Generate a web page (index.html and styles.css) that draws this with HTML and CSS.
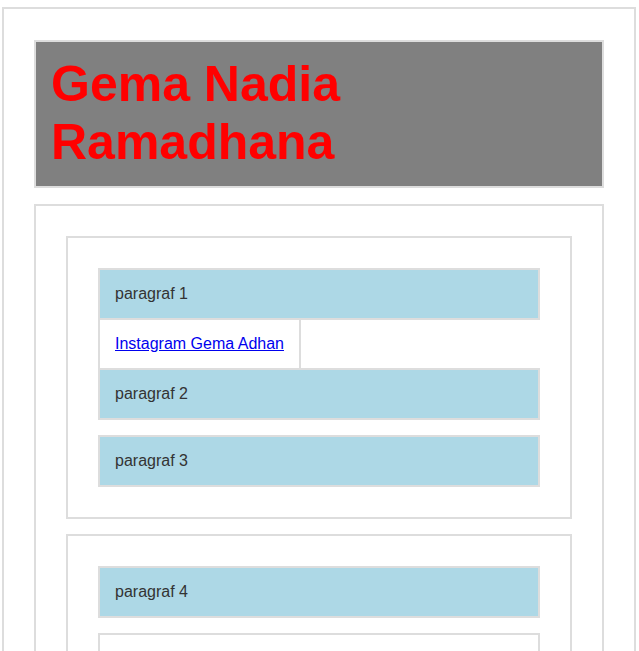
FILE: index.html
```html
<!DOCTYPE html>
<html>
<head>
<meta charset="utf-8">
<title>Gema Nadia Ramadhana</title>
<link rel="stylesheet" href="styles.css">
</head>
<body>
<div class="page">
  <header class="banner">
    <h1 class="title">Gema Nadia Ramadhana</h1>
  </header>
  <main class="section">
    <div class="card">
      <p class="para">paragraf 1</p>
      <div class="linkrow"><a class="link" href="#">Instagram Gema Adhan</a></div>
      <p class="para">paragraf 2</p>
      <p class="para spaced">paragraf 3</p>
    </div>
    <div class="card">
      <p class="para">paragraf 4</p>
      <div class="plain spaced"></div>
    </div>
  </main>
</div>
</body>
</html>
```

FILE: styles.css
```css
html, body {
  margin: 0;
  padding: 0;
  background: #ffffff;
}

body {
  font-family: "Liberation Sans", Arial, sans-serif;
  font-size: 16px;
  color: #333333;
}

.page {
  margin: 7px 3px 0 2px;
  border: 2px solid #dddddd;
  padding: 31px 30px 30px 30px;
}

.banner {
  background: #808080;
  border: 2px solid #dddddd;
  padding: 14px 15px 15px 15px;
}

.title {
  margin: 0;
  font-size: 50px;
  font-weight: bold;
  color: #ff0000;
  line-height: 57.5px;
}

.section {
  margin-top: 16px;
  border: 2px solid #dddddd;
  padding: 30px;
}

.card {
  border: 2px solid #dddddd;
  padding: 30px;
}

.card + .card {
  margin-top: 15px;
}

.para {
  margin: 0;
  background: #add8e6;
  border: 2px solid #dddddd;
  padding: 15px;
  line-height: 18px;
}

.spaced {
  margin-top: 15px;
}

.linkrow {
  height: 48px;
}

.link {
  display: inline-block;
  height: 18px;
  line-height: 18px;
  padding: 15px;
  border-left: 2px solid #dddddd;
  border-right: 2px solid #dddddd;
  color: #0000ee;
  text-decoration: underline;
}

.plain {
  border: 2px solid #dddddd;
  height: 60px;
}
```
